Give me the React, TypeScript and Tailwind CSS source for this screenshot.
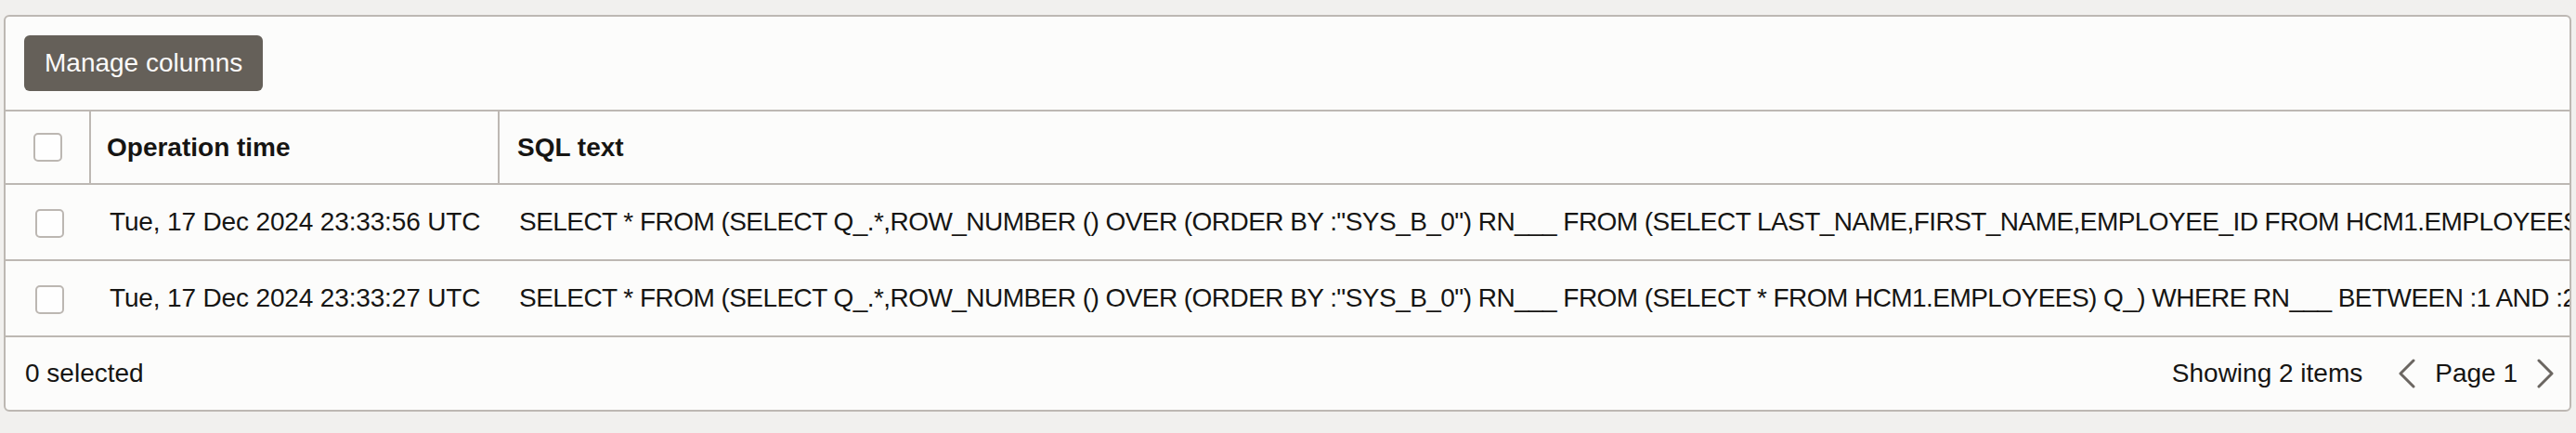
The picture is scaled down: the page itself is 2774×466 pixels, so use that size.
import React from "react";

const font = { fontFamily: '"Liberation Sans", Arial, Helvetica, sans-serif' };

function Box() {
  return <div className="w-[31px] h-[31px] rounded-[5px] border-2 border-[#bcb7b2] bg-[#fefefe]" />;
}

function Chevron({ dir }: { dir: "left" | "right" }) {
  return (
    <svg width="20" height="32" viewBox="0 0 20 32" fill="none">
      {dir === "left" ? (
        <polyline points="17,2 3,16 17,30" stroke="#6b6661" strokeWidth="3" strokeLinecap="round" strokeLinejoin="round" />
      ) : (
        <polyline points="3,2 17,16 3,30" stroke="#6b6661" strokeWidth="3" strokeLinecap="round" strokeLinejoin="round" />
      )}
    </svg>
  );
}

const rows = [
  {
    time: "Tue, 17 Dec 2024 23:33:56 UTC",
    sql: 'SELECT * FROM (SELECT Q_.*,ROW_NUMBER () OVER (ORDER BY :"SYS_B_0") RN___ FROM (SELECT LAST_NAME,FIRST_NAME,EMPLOYEE_ID FROM HCM1.EMPLOYEES) Q_) WHERE RN___ BETWEEN :1 AND :2',
  },
  {
    time: "Tue, 17 Dec 2024 23:33:27 UTC",
    sql: 'SELECT * FROM (SELECT Q_.*,ROW_NUMBER () OVER (ORDER BY :"SYS_B_0") RN___ FROM (SELECT * FROM HCM1.EMPLOYEES) Q_) WHERE RN___ BETWEEN :1 AND :2',
  },
];

export default function App() {
  return (
    <div className="min-h-[466px] w-full bg-[#f1f0ee] pt-[16px] pl-[4px] pr-[5px] pb-[23px]" style={font}>
      <div className="rounded-[6px] border-2 border-[#bdb8b3] bg-[#fcfcfb] overflow-hidden text-[#161513] text-[28px] leading-none">
        <div className="px-[20px] pt-[20px] pb-[20px]">
          <button className="h-[60px] px-[22px] rounded-[6px] bg-[#656059] text-[#fbfaf9] text-[28px]">
            Manage columns
          </button>
        </div>
        <div className="border-t-2 border-[#bdb8b3] flex h-[79px]">
          <div className="w-[92px] shrink-0 flex items-center justify-center border-r-2 border-[#bdb8b3]">
            <Box />
          </div>
          <div className="w-[440px] shrink-0 flex items-center pl-[17px] font-bold border-r-2 border-[#bdb8b3]">
            Operation time
          </div>
          <div className="flex items-center pl-[19px] font-bold">SQL text</div>
        </div>
        {rows.map((r, i) => (
          <div key={i} className="border-t-2 border-[#bdb8b3] flex h-[82px]">
            <div className="w-[94px] shrink-0 flex items-center justify-center pt-[3px]">
              <Box />
            </div>
            <div className="w-[440px] shrink-0 flex items-center pl-[18px] whitespace-nowrap tracking-[-0.15px]">{r.time}</div>
            <div className="flex-1 min-w-0 flex items-center pl-[19px] whitespace-nowrap overflow-hidden tracking-[-0.55px]">{r.sql}</div>
          </div>
        ))}
        <div className="border-t-2 border-[#bdb8b3] flex items-center justify-between h-[80px] pl-[21px] pr-[16px]">
          <span>0 selected</span>
          <div className="flex items-center">
            <span className="mr-[38px]">Showing 2 items</span>
            <Chevron dir="left" />
            <span className="mx-[20px]">Page 1</span>
            <Chevron dir="right" />
          </div>
        </div>
      </div>
    </div>
  );
}
